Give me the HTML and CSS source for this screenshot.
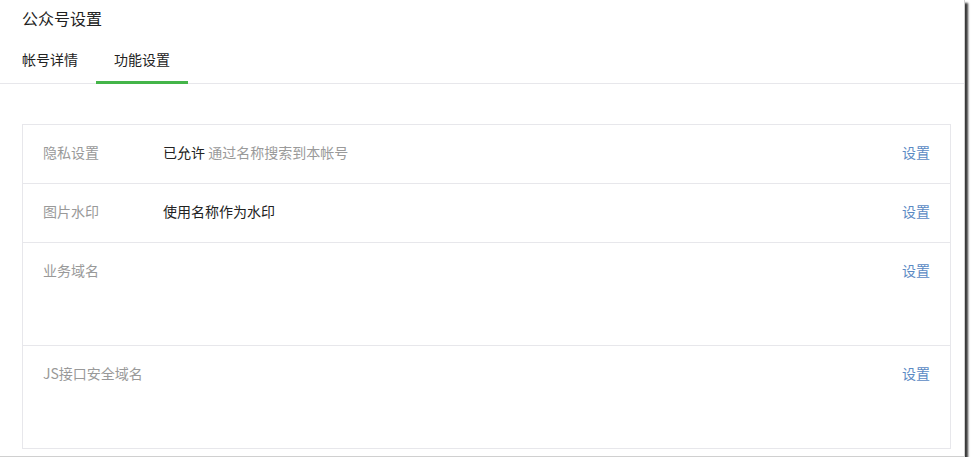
FILE: index.html
```html
<!DOCTYPE html>
<html lang="zh-CN">
<head>
    <meta charset="UTF-8">
    <title>公众号设置</title>
    <link rel="stylesheet" href="styles.css">
</head>
<body>
    <div class="frame">
        <div class="page-head">
            <h2 class="page-title">公众号设置</h2>
            <ul class="tabs">
                <li class="tab"><a href="#">帐号详情</a></li>
                <li class="tab active"><a href="#">功能设置</a></li>
            </ul>
        </div>
        <div class="settings">
            <div class="row">
                <span class="label">隐私设置</span>
                <span class="value">已允许 <span class="desc">通过名称搜索到本帐号</span></span>
                <a href="#" class="action">设置</a>
            </div>
            <div class="row">
                <span class="label">图片水印</span>
                <span class="value">使用名称作为水印</span>
                <a href="#" class="action">设置</a>
            </div>
            <div class="row tall">
                <span class="label">业务域名</span>
                <span class="value"></span>
                <a href="#" class="action">设置</a>
            </div>
            <div class="row tall">
                <span class="label">JS接口安全域名</span>
                <span class="value"></span>
                <a href="#" class="action">设置</a>
            </div>
        </div>
    </div>
</body>
</html>
```

FILE: styles.css
```css
body {
    margin: 0;
    padding: 0;
    background: #fff;
    font-family: 'Noto Sans CJK SC', 'Noto Sans', sans-serif;
    font-size: 14px;
    color: #353535;
}
.frame {
    width: 965px;
    height: 457px;
    box-sizing: border-box;
    border-right: 1px solid #d0d0d0;
    border-bottom: 1px solid #d0d0d0;
    box-shadow: 3px 3px 2px #3a3a3a;
    overflow: hidden;
}
.page-head {
    border-bottom: 1px solid #e7e7eb;
}
.page-title {
    margin: 0;
    padding: 7px 22px 0;
    font-size: 16px;
    font-weight: normal;
    line-height: 22px;
    color: #222;
}
.tabs {
    list-style: none;
    margin: 0;
    padding: 0 0 0 4px;
    display: flex;
    margin-top: 20px;
}
.tab a {
    display: block;
    padding: 0 18px;
    line-height: 20px;
    padding-bottom: 12px;
    color: #222;
    text-decoration: none;
    border-bottom: 3px solid transparent;
    margin-bottom: -1px;
}
.tab.active a {
    border-bottom-color: #44b549;
}
.settings {
    margin: 40px 13px 0 22px;
    border: 1px solid #e7e7eb;
}
.row {
    display: flex;
    align-items: flex-start;
    padding: 17px 20px 21px 20px;
    line-height: 20px;
    border-top: 1px solid #e7e7eb;
}
.row:first-child {
    border-top: none;
}
.row.tall {
    min-height: 64px;
}
.label {
    width: 120px;
    color: #999;
}
.value {
    flex: 1;
    color: #222;
}
.desc {
    color: #9a9a9a;
}
.action {
    color: #5b8ac4;
    text-decoration: none;
}
```
